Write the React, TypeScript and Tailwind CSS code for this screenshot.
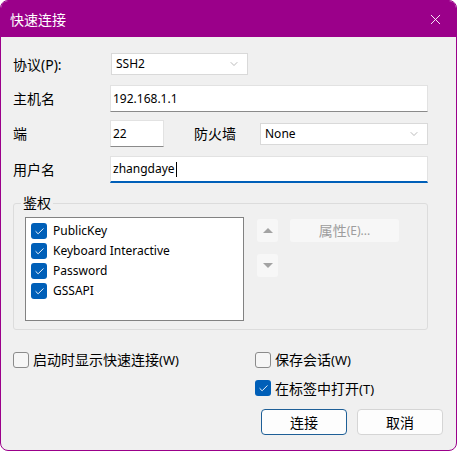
import React from "react";
import { X, ChevronDown, Check } from "lucide-react";

const font = { fontFamily: '"Noto Sans", "Noto Sans CJK SC", sans-serif' };

function Box({ checked }: { checked?: boolean }) {
  return checked ? (
    <span className="flex h-[16px] w-[16px] shrink-0 items-center justify-center rounded-[3px] bg-[#005fb8]">
      <Check size={11} strokeWidth={2} className="text-white" />
    </span>
  ) : (
    <span className="h-[16px] w-[16px] shrink-0 rounded-[3px] border border-[#8b8b8b] bg-[#f6f6f6]" />
  );
}

function Select({ value, className }: { value: string; className: string }) {
  return (
    <div
      className={`flex h-[22px] items-center justify-between border border-[#d9d9d9] bg-white pl-[4px] pr-[7px] text-[12px] text-black ${className}`}
    >
      <span>{value}</span>
      <ChevronDown size={12} strokeWidth={1} className="text-[#777]" />
    </div>
  );
}

function Field({ value, className, active }: { value: string; className: string; active?: boolean }) {
  return (
    <div
      className={`flex h-[27px] items-center border border-[#e2e2e2] bg-white pl-[2px] text-[12px] text-black ${
        active ? "border-b-2 border-b-[#005fb8]" : "border-b-[#8a8a8a]"
      } ${className}`}
    >
      <span>{value}</span>
      {active && <span className="ml-[1px] h-[15px] w-[1px] bg-black" />}
    </div>
  );
}

const authItems = ["PublicKey", "Keyboard Interactive", "Password", "GSSAPI"];

export default function App() {
  return (
    <div className="h-[451px] w-[457px] bg-white" style={font}>
      <div className="flex h-[451px] w-[457px] flex-col overflow-hidden rounded-[8px] border border-[#9b008a] bg-[#f0f0f0]">
        <div className="flex h-[36px] shrink-0 items-center justify-between bg-[#9b008a] pl-[9px] pr-[12px] text-white">
          <span className="text-[14px]">快速连接</span>
          <X size={17} strokeWidth={1.3} />
        </div>

        <div className="flex flex-col pl-[12px] text-[14px] text-black">
          <div className="mt-[16px] flex h-[22px] items-center">
            <span className="w-[98px]">协议(P):</span>
            <Select value="SSH2" className="w-[137px]" />
          </div>

          <div className="mt-[10px] flex items-center">
            <span className="w-[97px]">主机名</span>
            <Field value="192.168.1.1" className="w-[318px]" />
          </div>

          <div className="mt-[8px] flex h-[27px] items-center">
            <span className="w-[97px]">端</span>
            <Field value="22" className="w-[54px]" />
            <span className="ml-[30px] w-[66px]">防火墙</span>
            <Select value="None" className="w-[168px]" />
          </div>

          <div className="mt-[9px] flex items-center">
            <span className="w-[97px]">用户名</span>
            <Field value="zhangdaye" className="w-[318px]" active />
          </div>

          <div className="relative mt-[20px] h-[127px] w-[415px] rounded-[3px] border border-[#dcdcdc] pl-[11px] pt-[13px]">
            <span className="absolute left-[7px] top-[-11px] bg-[#f0f0f0] px-[2px] leading-[20px]">鉴权</span>
            <div className="flex">
              <div className="flex h-[104px] w-[219px] flex-col border border-[#828282] bg-white pl-[5px] pt-[3px]">
                {authItems.map((item) => (
                  <div key={item} className="flex h-[20px] items-center gap-[6px] text-[12px]">
                    <Box checked />
                    <span>{item}</span>
                  </div>
                ))}
              </div>
              <div className="ml-[13px] mt-[2px] flex flex-col gap-[12px]">
                <div className="flex h-[23px] w-[21px] items-center justify-center rounded-[3px] bg-[#f7f7f7]">
                  <span className="h-0 w-0 border-x-[5px] border-b-[5px] border-x-transparent border-b-[#a3a3a3]" />
                </div>
                <div className="flex h-[23px] w-[21px] items-center justify-center rounded-[3px] bg-[#f7f7f7]">
                  <span className="h-0 w-0 border-x-[5px] border-t-[5px] border-x-transparent border-t-[#a3a3a3]" />
                </div>
              </div>
              <div className="ml-[12px] mt-[2px] flex h-[23px] w-[109px] items-center justify-center rounded-[3px] bg-[#f7f7f7] text-[14px] text-[#9d9d9d]">
                属性<span className="text-[12px]">(E)...</span>
              </div>
            </div>
          </div>

          <div className="mt-[19px] flex items-start">
            <div className="flex w-[242px] items-center gap-[4px]">
              <Box />
              <span>
                启动时显示快速连接<span className="text-[13px]">(W)</span>
              </span>
            </div>
            <div className="flex flex-col gap-[7px]">
              <div className="flex items-center gap-[4px]">
                <Box />
                <span>
                  保存会话<span className="text-[13px]">(W)</span>
                </span>
              </div>
              <div className="flex items-center gap-[4px]">
                <Box checked />
                <span>
                  在标签中打开<span className="text-[13px]">(T)</span>
                </span>
              </div>
            </div>
          </div>

          <div className="mt-[10px] flex gap-[10px] pl-[248px]">
            <button className="flex h-[26px] w-[86px] items-center justify-center rounded-[4px] border border-[#1e5f97] bg-[#fdfdfd] text-[14px]">
              连接
            </button>
            <button className="flex h-[26px] w-[86px] items-center justify-center rounded-[4px] border border-[#d5d5d5] bg-[#fdfdfd] text-[14px]">
              取消
            </button>
          </div>
        </div>
      </div>
    </div>
  );
}
